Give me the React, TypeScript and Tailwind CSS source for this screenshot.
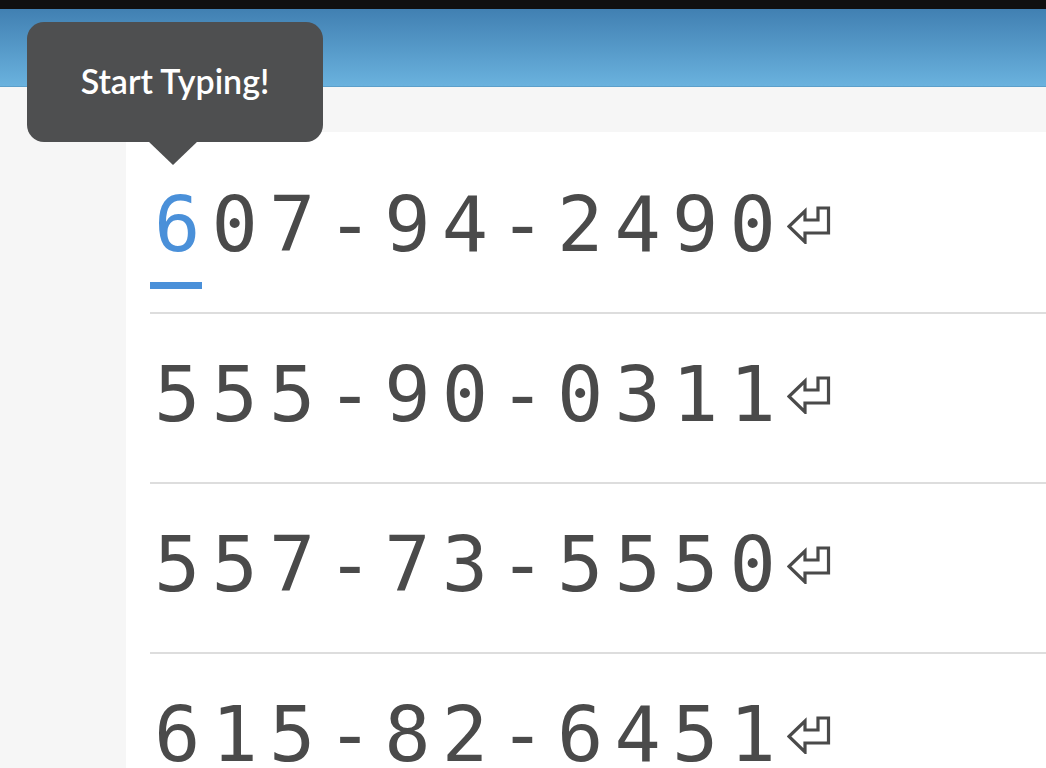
import React from "react";

const rows = ["607-94-2490", "555-90-0311", "557-73-5550", "615-82-6451"];

function ReturnMark() {
  return (
    <svg width="44" height="38" viewBox="0 0 44 38" className="mt-[26px] shrink-0">
      <path
        d="M2 20.5 L18 5 L18 14 L31 14 L31 2 L41.5 2 L41.5 27 L18 27 L18 36 Z"
        fill="none"
        stroke="#4a4a4a"
        strokeWidth="3.2"
        strokeLinejoin="miter"
      />
    </svg>
  );
}

export default function App() {
  return (
    <div className="relative w-[1046px] h-[768px] overflow-hidden bg-[#f6f6f6]">
      <div className="h-[9px] bg-[#101010]" />
      <div className="h-[78px] bg-linear-to-b from-[#4180b2] to-[#6ab2de] border-b border-[#5c9fca]" />
      <main className="pl-[126px] pt-[45px]">
        <div className="bg-white pl-6 pt-3 h-[700px]">
          {rows.map((r, i) => (
            <div key={r} className="relative h-[170px] border-b-2 border-[#dddddd]">
              <div className="flex items-start pl-[4px] pt-[36px] font-['DejaVu_Sans_Mono',monospace] text-[77px] leading-[90px] tracking-[11.2px] text-[#4a4a4a] [font-variant-numeric:slashed-zero]">
                <span>
                  {i === 0 ? (
                    <>
                      <span className="text-[#4a90d9]">{r[0]}</span>
                      {r.slice(1)}
                    </>
                  ) : (
                    r
                  )}
                </span>
                <ReturnMark />
              </div>
              {i === 0 && (
                <div className="absolute left-0 top-[138px] w-[52px] h-[7px] bg-[#4a90d9]" />
              )}
            </div>
          ))}
        </div>
      </main>
      <div className="absolute left-[27px] top-[22px] w-[296px] h-[120px] rounded-[17px] bg-[#4e4f50] flex items-center justify-center">
        <span className="font-['Lato',sans-serif] font-semibold text-[34px] leading-none text-white -mt-[2px]">
          Start Typing!
        </span>
        <div className="absolute left-[121px] top-[119px] w-0 h-0 border-l-[25px] border-r-[25px] border-t-[24px] border-l-transparent border-r-transparent border-t-[#4e4f50]" />
      </div>
    </div>
  );
}
